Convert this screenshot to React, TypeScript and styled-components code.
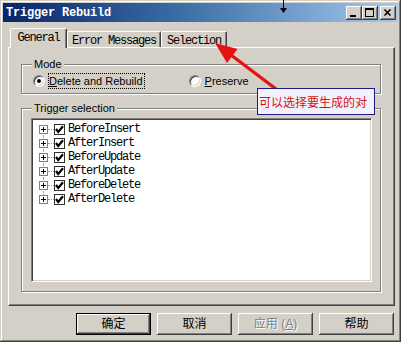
import React from 'react'
import styled, { createGlobalStyle } from 'styled-components'

const GlobalStyle = createGlobalStyle`
  html, body {
    margin: 0;
    padding: 0;
    background: #fff;
  }
  body {
    width: 403px;
    height: 343px;
    overflow: hidden;
  }
`

const face = '#d4d0c8'
const mono = `'Liberation Mono', 'DejaVu Sans Mono', monospace`
const sans = `'Liberation Sans', Arial, sans-serif`
const cjk = `'Liberation Sans', 'Noto Sans CJK SC', sans-serif`

const raised = `
  box-shadow: inset -1px -1px #404040, inset 1px 1px #fff,
    inset -2px -2px #808080, inset 2px 2px ${face};
`

const triggers = ['BeforeInsert', 'AfterInsert', 'BeforeUpdate', 'AfterUpdate', 'BeforeDelete', 'AfterDelete']

const App = () => {
  return (
    <>
      <GlobalStyle />
      <Window>
        <TitleBar>
          <Title>Trigger Rebuild</Title>
          <CaptionButton>
            <svg width='16' height='14' viewBox='0 0 16 14'>
              <rect x='4' y='9' width='6' height='2' fill='#000' />
            </svg>
          </CaptionButton>
          <CaptionButton>
            <svg width='16' height='14' viewBox='0 0 16 14'>
              <rect x='3.5' y='2.5' width='8' height='8' fill='none' stroke='#000' />
              <rect x='3' y='2' width='9' height='2' fill='#000' />
            </svg>
          </CaptionButton>
          <CaptionButton $gap>
            <svg width='16' height='14' viewBox='0 0 16 14'>
              <path d='M4.5 3.5 L10.5 9.5 M10.5 3.5 L4.5 9.5' stroke='#000' strokeWidth='1.6' />
            </svg>
          </CaptionButton>
        </TitleBar>

        <TabStrip>
          <Tab $active $width={57}>General</Tab>
          <Tab $width={94}>Error Messages</Tab>
          <Tab $width={66}>Selection</Tab>
        </TabStrip>

        <Panel>
          <GroupBox $height={30}>
            <Caption>Mode</Caption>
            <RadioRow>
              <RadioOption>
                <Radio $checked />
                <RadioLabel $focused><u>D</u>elete and Rebuild</RadioLabel>
              </RadioOption>
              <RadioOption>
                <Radio />
                <RadioLabel><u>P</u>reserve</RadioLabel>
              </RadioOption>
            </RadioRow>
          </GroupBox>

          <GroupBox $height={184} $top={14}>
            <Caption>Trigger selection</Caption>
            <TreeBox>
              {triggers.map((name, i) => (
                <TreeRow key={name}>
                  <Expander $first={i === 0} $last={i === triggers.length - 1}>
                    <svg width='9' height='9' viewBox='0 0 9 9'>
                      <rect x='0.5' y='0.5' width='8' height='8' fill='#fff' stroke='#808080' />
                      <path d='M2 4.5 H7 M4.5 2 V7' stroke='#000' />
                    </svg>
                  </Expander>
                  <Connector />
                  <CheckBox>
                    <svg width='9' height='9' viewBox='0 0 9 9'>
                      <path d='M1 4 L3.2 7 L8 1.2' fill='none' stroke='#000' strokeWidth='2.2' />
                    </svg>
                  </CheckBox>
                  <TreeLabel>{name}</TreeLabel>
                </TreeRow>
              ))}
            </TreeBox>
          </GroupBox>
        </Panel>

        <ButtonRow>
          <Button $default>确定</Button>
          <Button>取消</Button>
          <Button $disabled>应用 (<u>A</u>)</Button>
          <Button>帮助</Button>
        </ButtonRow>

        <PointerArrow width='9' height='14' viewBox='0 0 9 14'>
          <path d='M4.5 0 V9' stroke='#000' strokeWidth='1' />
          <path d='M1 8 H8 L4.5 13 Z' fill='#000' />
        </PointerArrow>

        <RedArrow width='80' height='60' viewBox='0 0 80 60'>
          <path d='M70 52 L21 15' stroke='#e41212' strokeWidth='3.4' strokeLinecap='round' />
          <path d='M5 3 L17 23 L27.5 9 Z' fill='#e41212' />
        </RedArrow>

        <Note>可以选择要生成的对</Note>
      </Window>
    </>
  )
}

const Window = styled.div`
  position: relative;
  box-sizing: border-box;
  width: 401px;
  height: 342px;
  padding: 3px;
  display: flex;
  flex-direction: column;
  background: ${face};
  box-shadow: inset -1px -1px #404040, inset 1px 1px ${face},
    inset -2px -2px #808080, inset 2px 2px #fff;
`

const TitleBar = styled.div`
  height: 19px;
  display: flex;
  align-items: center;
  padding: 0 2px 0 3px;
  background: linear-gradient(90deg, #0a246a 0%, #3a6ea5 45%, #a6caf0 100%);
`

const Title = styled.div`
  flex: 1;
  color: #fff;
  font: bold 12px ${mono};
  letter-spacing: -0.2px;
  padding-top: 1px;
`

const CaptionButton = styled.div<{ $gap?: boolean }>`
  width: 16px;
  height: 14px;
  margin-left: ${p => (p.$gap ? '2px' : '0')};
  background: ${face};
  ${raised}
  svg {
    display: block;
  }
`

const TabStrip = styled.div`
  display: flex;
  align-items: flex-end;
  height: 25px;
  margin-left: 5px;
  padding-left: 2px;
`

const Tab = styled.div<{ $active?: boolean; $width: number }>`
  position: relative;
  z-index: ${p => (p.$active ? 1 : 0)};
  box-sizing: border-box;
  width: ${p => p.$width}px;
  height: ${p => (p.$active ? 20 : 16)}px;
  margin-bottom: ${p => (p.$active ? '-1px' : '0')};
  padding-top: 2px;
  display: flex;
  justify-content: center;
  align-items: flex-start;
  background: ${face};
  border-top: 1px solid #fff;
  border-left: 1px solid #fff;
  border-right: 1px solid #404040;
  border-radius: 2px 2px 0 0;
  box-shadow: inset -1px 0 #808080;
  color: #000;
  font: 12px/14px ${mono};
  letter-spacing: -1.2px;
`

const Panel = styled.div`
  box-sizing: border-box;
  width: 387px;
  height: 259px;
  margin-left: 5px;
  padding: 16px 0 0 12px;
  background: ${face};
  border-top: 1px solid #fff;
  border-left: 1px solid #fff;
  border-right: 1px solid #404040;
  border-bottom: 1px solid #404040;
  box-shadow: inset -1px -1px #808080;
`

const GroupBox = styled.div<{ $height: number; $top?: number }>`
  box-sizing: border-box;
  width: 360px;
  height: ${p => p.$height}px;
  margin-top: ${p => p.$top ?? 0}px;
  border: 1px solid #808080;
  box-shadow: inset 1px 1px #fff, 1px 1px #fff;
  display: flex;
  flex-direction: column;
`

const Caption = styled.div`
  width: fit-content;
  margin: -7px 0 0 10px;
  padding: 0 2px;
  background: ${face};
  color: #000;
  font: 11px/13px ${sans};
`

const RadioRow = styled.div`
  display: flex;
  gap: 44px;
  margin-top: 2px;
  padding-left: 11px;
`

const RadioOption = styled.div`
  display: flex;
  align-items: center;
  gap: 3px;
  height: 16px;
`

const Radio = styled.span<{ $checked?: boolean }>`
  position: relative;
  box-sizing: border-box;
  width: 12px;
  height: 12px;
  border-radius: 50%;
  background: #fff;
  border: 1px solid;
  border-color: #808080 #fff #fff #808080;
  box-shadow: inset 1px 1px #404040, inset -1px -1px ${face};
  &::after {
    content: '';
    display: ${p => (p.$checked ? 'block' : 'none')};
    position: absolute;
    left: 3px;
    top: 3px;
    width: 4px;
    height: 4px;
    border-radius: 50%;
    background: #000;
  }
`

const RadioLabel = styled.span<{ $focused?: boolean }>`
  box-sizing: border-box;
  height: 16px;
  padding: 1px 2px 0 1px;
  outline: ${p => (p.$focused ? '1px dotted #000' : 'none')};
  outline-offset: -1px;
  color: #000;
  font: 11px/14px ${sans};
  u {
    text-decoration-thickness: 1px;
  }
`

const TreeBox = styled.div`
  box-sizing: border-box;
  width: 341px;
  height: 164px;
  margin: 3px 0 0 9px;
  padding: 3px 0 0 7px;
  background: #fff;
  border: 1px solid;
  border-color: #808080 #fff #fff #808080;
  box-shadow: inset 1px 1px #404040, inset -1px -1px ${face};
  display: flex;
  flex-direction: column;
`

const TreeRow = styled.div`
  display: flex;
  align-items: center;
  height: 14px;
`

const Expander = styled.span<{ $first?: boolean; $last?: boolean }>`
  position: relative;
  width: 9px;
  height: 14px;
  display: flex;
  align-items: center;
  svg {
    position: relative;
    z-index: 1;
    display: block;
    margin-top: 1px;
  }
  &::before {
    content: '';
    position: absolute;
    left: 4px;
    top: ${p => (p.$first ? '7px' : '0')};
    bottom: ${p => (p.$last ? '7px' : '0')};
    border-left: 1px dotted #a0a0a0;
  }
`

const Connector = styled.span`
  width: 6px;
  height: 0;
  margin-top: 1px;
  border-top: 1px dotted #a0a0a0;
`

const CheckBox = styled.span`
  box-sizing: border-box;
  width: 11px;
  height: 11px;
  display: flex;
  align-items: center;
  justify-content: center;
  background: #fff;
  border: 1px solid #303030;
  svg {
    display: block;
  }
`

const TreeLabel = styled.span`
  margin-left: 3px;
  color: #000;
  font: 12px/14px ${mono};
  letter-spacing: -1.2px;
`

const ButtonRow = styled.div`
  display: flex;
  justify-content: flex-end;
  gap: 6px;
  margin-top: 7px;
  padding-right: 4px;
`

const Button = styled.div<{ $default?: boolean; $disabled?: boolean }>`
  box-sizing: border-box;
  width: 75px;
  height: 22px;
  display: flex;
  align-items: center;
  justify-content: center;
  background: ${face};
  color: ${p => (p.$disabled ? '#808080' : '#000')};
  text-shadow: ${p => (p.$disabled ? '1px 1px #fff' : 'none')};
  font: 12px/14px ${cjk};
  ${p =>
    p.$default
      ? `box-shadow: inset 0 0 0 1px #000, inset -2px -2px #404040, inset 2px 2px #fff,
          inset -3px -3px #808080;`
      : raised}
`

const PointerArrow = styled.svg`
  position: absolute;
  left: 279px;
  top: 0;
`

const RedArrow = styled.svg`
  position: absolute;
  left: 210px;
  top: 40px;
  pointer-events: none;
`

const Note = styled.div`
  position: absolute;
  left: 257px;
  top: 88px;
  box-sizing: border-box;
  width: 118px;
  height: 27px;
  display: flex;
  align-items: center;
  padding-left: 1px;
  background: #f3f1fb;
  border: 1px solid #1c1c84;
  color: #d41414;
  font: 12px/14px 'Noto Sans CJK SC', sans-serif;
  white-space: nowrap;
`

export default App
